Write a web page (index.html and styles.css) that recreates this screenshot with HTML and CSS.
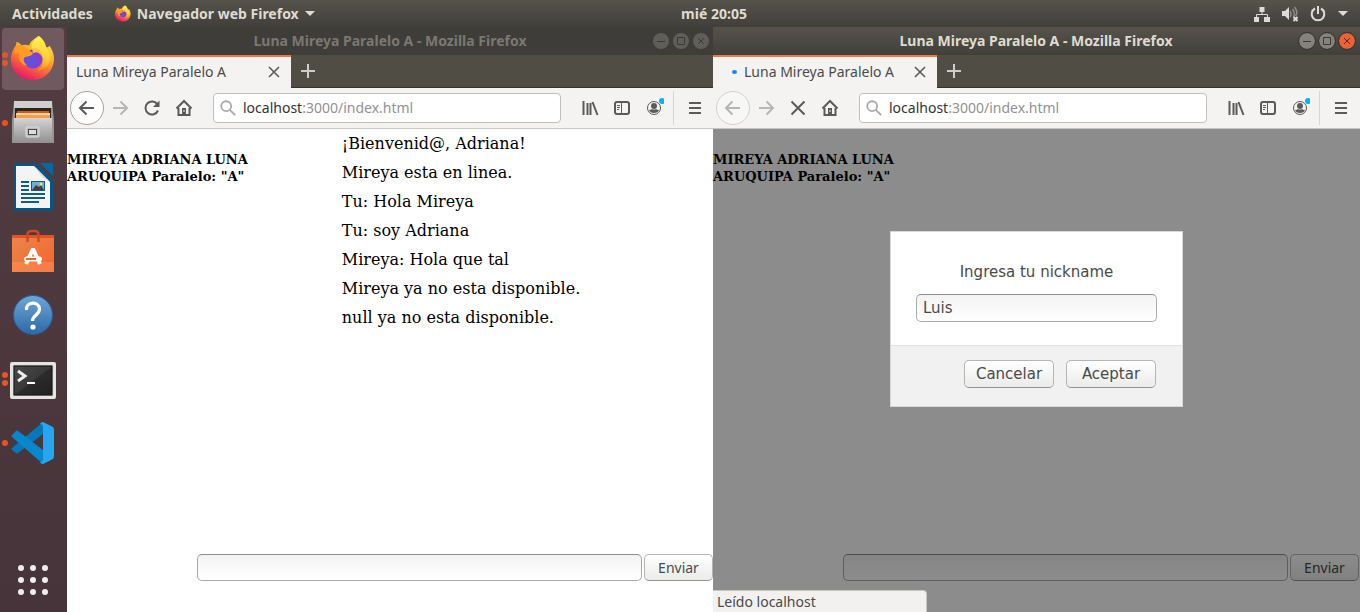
FILE: index.html
```html
<!DOCTYPE html>
<html lang="es">
<head>
<meta charset="utf-8">
<title>Luna Mireya Paralelo A</title>
<link rel="stylesheet" href="styles.css">
</head>
<body>
<svg class="defs" aria-hidden="true">
  <defs>
    <linearGradient id="flame" x1="0.8" y1="0" x2="0.3" y2="1"><stop offset="0" stop-color="#fff24a"/><stop offset=".38" stop-color="#ffb22e"/><stop offset=".65" stop-color="#ff6a34"/><stop offset="1" stop-color="#e5116f"/></linearGradient>
    <linearGradient id="flame-top" x1="0.6" y1="0" x2="0.5" y2="1"><stop offset="0" stop-color="#fff44f"/><stop offset=".6" stop-color="#ffd236"/><stop offset="1" stop-color="#ff9128"/></linearGradient>
    <radialGradient id="globe" cx=".4" cy=".7" r=".7"><stop offset="0" stop-color="#5a57e0"/><stop offset="1" stop-color="#9234cf"/></radialGradient>
    <linearGradient id="steel" x1="0" y1="0" x2="0" y2="1"><stop offset="0" stop-color="#d4d4d4"/><stop offset="1" stop-color="#8f8f8f"/></linearGradient>
    <linearGradient id="bag" x1="0" y1="0" x2="1" y2="1"><stop offset="0" stop-color="#e9874d"/><stop offset="1" stop-color="#f4642a"/></linearGradient>
    <linearGradient id="help" x1="0" y1="0" x2="0" y2="1"><stop offset="0" stop-color="#6ea6d8"/><stop offset="1" stop-color="#2b69a5"/></linearGradient>
    <linearGradient id="screen" x1="0" y1="0" x2="1" y2="1"><stop offset="0" stop-color="#4a4a4a"/><stop offset=".5" stop-color="#393939"/><stop offset=".52" stop-color="#2b2b2b"/><stop offset="1" stop-color="#202020"/></linearGradient>
  </defs>
  <symbol id="firefox" viewBox="0 0 46 48">
    <path d="M29 1c6 4 7 9 8 12 3 0 3-2 3-2 5 7 6 14 4 20-3 10-12 16-21 16C10 47 0 38 0 25c0-5 2-10 5-14l1-4c2 1 4 2 5 4 2-1 5-1 8 0 1-4 5-7 10-10z" fill="url(#flame)"/>
    <path d="M29 1c-5 4-8 8-7 13 5 0 9 3 11 8 2 7-1 12-5 15 9-1 14-8 13-16-1-5-3-6-5-9-1-4-3-8-7-11z" fill="url(#flame-top)"/>
    <circle cx="23" cy="25" r="10" fill="url(#globe)"/>
    <path d="M6 11c4-1 8 0 11 3l6 5c-1 3-5 3-8 4-4 2-1 6 2 9-8-1-10-8-8-14-2 0-4 1-5 3 0-4 0-7 2-10z" fill="#ff9d22"/>
    <path d="M22 14c8-1 12 5 12 11-2-4-4-6-7-7-2 0-4 1-4 1z" fill="#ffbf37"/>
  </symbol>
  <symbol id="back" viewBox="0 0 20 20"><path d="M17 10H3M9.500 3.500L3 10l6.500 6.500" class="line"/></symbol>
  <symbol id="forward" viewBox="0 0 20 20"><path d="M3 10h14M10.500 3.500L17 10l-6.500 6.500" class="line"/></symbol>
  <symbol id="reload" viewBox="0 0 20 20"><path d="M15.500 6.500a6.500 6.500 0 1 0 .5 6" class="line"/><path d="M17.500 2.500v6.500H11z" fill="currentColor"/></symbol>
  <symbol id="stop" viewBox="0 0 20 20"><path d="M3.500 3.500l13 13M16.500 3.500l-13 13" class="line"/></symbol>
  <symbol id="home" viewBox="0 0 20 20"><path d="M2.500 10.500L10 3l7.500 7.500M4.500 10v7h11v-7" class="line"/><path d="M8 10h4v6H8z" fill="currentColor"/><path d="M10 12v2" stroke="#f4f3f2"/></symbol>
  <symbol id="search" viewBox="0 0 20 20"><circle cx="8" cy="8" r="5.500" class="line"/><path d="M12 12l6 6" class="line"/></symbol>
  <symbol id="library" viewBox="0 0 20 20"><path d="M3.500 3v14M7.500 5v12M10.500 5v12M12.500 4l5 13" class="line"/></symbol>
  <symbol id="sidebar" viewBox="0 0 20 20"><rect x="3" y="4" width="14" height="12" rx="2" class="line"/><path d="M9.500 4v12M5 7.500h3M5 9.500h3M5 11.500h2" stroke="currentColor" fill="none"/></symbol>
  <symbol id="account" viewBox="0 0 20 20"><circle cx="10" cy="10" r="6.500" fill="none" stroke="currentColor"/><circle cx="10" cy="8" r="3" fill="currentColor"/><path d="M5 12q2 0 3-1 2 1 4 0 1 1 3 1-1 3-5 3t-5-3z" fill="currentColor"/><circle cx="18" cy="3" r="3" fill="#00b3f4"/></symbol>
  <symbol id="menu" viewBox="0 0 20 20"><path d="M4 5h12M4 10h12M4 15h12" class="line"/></symbol>
  <symbol id="close" viewBox="0 0 20 20"><path d="M5 5l10 10M15 5L5 15" class="line thin"/></symbol>
  <symbol id="plus" viewBox="0 0 20 20"><path d="M10 3v14M3 10h14" class="line"/></symbol>
</svg>

<header class="topbar">
  <div class="topbar-left">
    <button class="bar-button">Actividades</button>
    <button class="bar-button app-menu"><svg class="icon-16"><use href="#firefox"/></svg>Navegador web Firefox<span class="caret"></span></button>
  </div>
  <time class="clock">mié 20:05</time>
  <div class="tray">
    <svg class="tray-icon" viewBox="0 0 16 16"><path d="M5.500 1h5v5h-5zM0 11h5v5H0zM10 11h6v5h-6z" fill="#dcdbd8"/><path d="M8 6v2.500M2.500 11V8.500h11V11" fill="none" stroke="#dcdbd8"/></svg>
    <svg class="tray-icon" viewBox="0 0 16 16"><path d="M0 5h3l4-4v13l-4-4H0z" fill="#dcdbd8"/><path d="M8 5q2 3 0 6M10.500 3q3 4 1 8M12.500 1q4 5 1 9" fill="none" stroke="#8e8b84" stroke-width="1.500"/><path d="M11.500 11l4 4M15.500 11l-4 4" stroke="#dcdbd8" stroke-width="2"/></svg>
    <svg class="tray-icon" viewBox="0 0 16 16"><path d="M5 2.500a6.300 6.300 0 1 0 6 0M8 0v8" fill="none" stroke="#dcdbd8" stroke-width="2"/></svg>
    <span class="caret"></span>
  </div>
</header>

<div class="desktop">
  <nav class="dock" aria-label="Aplicaciones">
    <button class="app active" aria-label="Firefox"><span class="dots"><i></i><i></i></span><svg class="icon-48" viewBox="0 0 48 48"><use href="#firefox" x="1" y="0" width="46" height="46"/></svg></button>
    <button class="app" aria-label="Archivos"><span class="dots"><i></i></span><svg class="icon-48" viewBox="0 0 48 48"><path d="M5 2h38l2 20v22H3V22z" fill="#969696"/><path d="M5 2h38v7H5z" fill="#cfcfcf"/><path d="M6 9h36v12H6z" fill="#292522"/><path d="M8 12h32v8H8z" fill="#d45a20"/><path d="M7 14h34v2H7z" fill="#ffd39a"/><path d="M7 16h34v5H7z" fill="#f2a04c"/><path d="M5 19h38v25H5z" fill="url(#steel)"/><rect x="17" y="28" width="13" height="10" rx="1" fill="#b9b9b9" stroke="#e0e0e0"/><rect x="19.500" y="30.500" width="8" height="5" fill="#ddd" stroke="#484848"/></svg></button>
    <button class="app" aria-label="LibreOffice Writer"><span class="dots"></span><svg class="icon-48" viewBox="0 0 48 48"><path d="M7 0h20l17 17v28q0 3-3 3H7q-3 0-3-3V3q0-3 3-3z" fill="#0d5285"/><path d="M31 0h13v13z" fill="#0867a3"/><path d="M7 3h18l16 16v26H7z" fill="#f4f4f3"/><path d="M25 3l16 16-8-5z" fill="#d9dcdf"/><path d="M12 19h8M12 23h8M12 27h8M12 31h24M12 35h24M12 39h18" stroke="#125b8a" stroke-width="2"/><path d="M22 18h14v10H22z" fill="#145a8e"/><path d="M23 19h12v8H23z" fill="#6caed4"/><path d="M23 27l4-5 3 2 2-2 3 5z" fill="#3c4241"/><circle cx="32" cy="21" r="1.500" fill="#f8e05c"/></svg></button>
    <button class="app" aria-label="Software de Ubuntu"><span class="dots"></span><svg class="icon-48" viewBox="0 0 48 48"><path d="M3 8h42v37H3z" fill="url(#bag)"/><path d="M3 8h42v3H3z" fill="#e05325"/><path d="M3 35h42v10H3z" fill="#ff9c66" opacity=".4"/><path d="M18.500 15V8q0-4 4-4h3q4 0 4 4v7" fill="none" stroke="#cf4a20" stroke-width="2.500"/><path d="M17 37l6.500-14h1L31 37" fill="none" stroke="#fff" stroke-width="4"/><rect x="15" y="29.500" width="18" height="5" rx="2.500" fill="#fff"/><path d="M17 32h10" stroke="#e9692c" stroke-width="2"/></svg></button>
    <button class="app" aria-label="Ayuda"><span class="dots"></span><svg class="icon-48" viewBox="0 0 48 48"><circle cx="24" cy="24" r="19.500" fill="url(#help)" stroke="#285f96"/><path d="M17.500 19c-1-9 13-9 13-1 0 6-7 6-7 12" fill="none" stroke="#fff" stroke-width="3.200"/><circle cx="24" cy="36" r="2.600" fill="#fff"/></svg></button>
    <button class="app" aria-label="Terminal"><span class="dots"><i></i><i></i></span><svg class="icon-48" viewBox="0 0 48 48"><rect x="1" y="7" width="46" height="37" rx="2" fill="#e4e4e2"/><path d="M4 10h40v31H4z" fill="#aaa"/><path d="M5 11h38v29H5z" fill="url(#screen)" stroke="#171717"/><path d="M9 16l7 5-7 5" fill="none" stroke="#eee" stroke-width="3"/><path d="M18 28h8" stroke="#fff" stroke-width="2"/></svg></button>
    <button class="app" aria-label="Visual Studio Code"><span class="dots"><i></i></span><svg class="icon-48" viewBox="0 0 48 48"><path d="M34 3v12L9 34q-1 1-2 0l-4-3q-1-1 0-2z" fill="#0877b9"/><path d="M3 16l4-4q1-1 2 0l25 19v14L3 18q-1-1 0-2z" fill="#0788cc"/><path d="M34 3l10 5 1 2v28l-1 2-10 5q-2 0-3-2 3 0 3-3V8q0-3-3-3 1-2 3-2z" fill="#26a5f0"/></svg></button>
    <button class="app grid-button" aria-label="Mostrar aplicaciones"><span class="dots"></span><svg class="icon-48" viewBox="0 0 48 48"><g fill="#eee"><circle cx="12" cy="12" r="3"/><circle cx="24" cy="12" r="3"/><circle cx="36" cy="12" r="3"/><circle cx="12" cy="24" r="3"/><circle cx="24" cy="24" r="3"/><circle cx="36" cy="24" r="3"/><circle cx="12" cy="36" r="3"/><circle cx="24" cy="36" r="3"/><circle cx="36" cy="36" r="3"/></g></svg></button>
  </nav>

  <section class="window inactive">
    <div class="titlebar"><span class="title">Luna Mireya Paralelo A - Mozilla Firefox</span>
      <div class="controls">
        <button class="control" aria-label="Minimizar"><svg viewBox="0 0 16 16"><path d="M4 8.500h8"/></svg></button>
        <button class="control" aria-label="Maximizar"><svg viewBox="0 0 16 16"><path d="M4.500 4.500h7v7h-7z"/></svg></button>
        <button class="control quit" aria-label="Cerrar"><svg viewBox="0 0 16 16"><path d="M5 5l6 6M11 5l-6 6"/></svg></button>
      </div>
    </div>
    <div class="tabs"><div class="tab"><span class="tab-label">Luna Mireya Paralelo A</span><button class="tool small" aria-label="Cerrar pestaña"><svg><use href="#close"/></svg></button></div><button class="tool new-tab" aria-label="Nueva pestaña"><svg><use href="#plus"/></svg></button></div>
    <div class="toolbar">
      <button class="tool round" aria-label="Atrás"><svg><use href="#back"/></svg></button>
      <button class="tool faded" aria-label="Adelante"><svg><use href="#forward"/></svg></button>
      <button class="tool" aria-label="Recargar"><svg><use href="#reload"/></svg></button>
      <button class="tool" aria-label="Inicio"><svg><use href="#home"/></svg></button>
      <a class="address" href="#pagina-1"><svg><use href="#search"/></svg><span><b>localhost</b>:3000/index.html</span></a>
      <button class="tool" aria-label="Biblioteca"><svg><use href="#library"/></svg></button>
      <button class="tool" aria-label="Barra lateral"><svg><use href="#sidebar"/></svg></button>
      <button class="tool" aria-label="Cuenta"><svg><use href="#account"/></svg></button>
      <span class="divider"></span>
      <button class="tool" aria-label="Menú"><svg><use href="#menu"/></svg></button>
    </div>
    <main class="page" id="pagina-1">
      <div class="chat">
        <h5 class="owner">MIREYA ADRIANA LUNA ARUQUIPA Paralelo: "A"</h5>
        <ul class="messages">
          <li>¡Bienvenid@, Adriana!</li>
          <li>Mireya esta en linea.</li>
          <li>Tu: Hola Mireya</li>
          <li>Tu: soy Adriana</li>
          <li>Mireya: Hola que tal</li>
          <li>Mireya ya no esta disponible.</li>
          <li>null ya no esta disponible.</li>
        </ul>
      </div>
      <form class="composer"><input class="field" type="text" aria-label="Mensaje"><button class="push" type="button">Enviar</button></form>
    </main>
  </section>

  <section class="window focused">
    <div class="titlebar"><span class="title">Luna Mireya Paralelo A - Mozilla Firefox</span>
      <div class="controls">
        <button class="control" aria-label="Minimizar"><svg viewBox="0 0 16 16"><path d="M4 8.500h8"/></svg></button>
        <button class="control" aria-label="Maximizar"><svg viewBox="0 0 16 16"><path d="M4.500 4.500h7v7h-7z"/></svg></button>
        <button class="control quit" aria-label="Cerrar"><svg viewBox="0 0 16 16"><path d="M5 5l6 6M11 5l-6 6"/></svg></button>
      </div>
    </div>
    <div class="tabs"><div class="tab loading"><span class="spinner"></span><span class="tab-label">Luna Mireya Paralelo A</span><button class="tool small" aria-label="Cerrar pestaña"><svg><use href="#close"/></svg></button></div><button class="tool new-tab" aria-label="Nueva pestaña"><svg><use href="#plus"/></svg></button></div>
    <div class="toolbar">
      <button class="tool round faded" aria-label="Atrás"><svg><use href="#back"/></svg></button>
      <button class="tool faded" aria-label="Adelante"><svg><use href="#forward"/></svg></button>
      <button class="tool" aria-label="Detener"><svg><use href="#stop"/></svg></button>
      <button class="tool" aria-label="Inicio"><svg><use href="#home"/></svg></button>
      <a class="address" href="#pagina-2"><svg><use href="#search"/></svg><span><b>localhost</b>:3000/index.html</span></a>
      <button class="tool" aria-label="Biblioteca"><svg><use href="#library"/></svg></button>
      <button class="tool" aria-label="Barra lateral"><svg><use href="#sidebar"/></svg></button>
      <button class="tool" aria-label="Cuenta"><svg><use href="#account"/></svg></button>
      <span class="divider"></span>
      <button class="tool" aria-label="Menú"><svg><use href="#menu"/></svg></button>
    </div>
    <main class="page" id="pagina-2">
      <div class="chat"><h5 class="owner">MIREYA ADRIANA LUNA ARUQUIPA Paralelo: "A"</h5></div>
      <form class="composer"><input class="field" type="text" aria-label="Mensaje"><button class="push" type="button">Enviar</button></form>
      <div class="shade">
        <form class="prompt">
          <div class="prompt-body"><label for="nickname">Ingresa tu nickname</label><input class="field" id="nickname" type="text" value="Luis"></div>
          <div class="prompt-actions"><button class="push" type="button">Cancelar</button><button class="push" type="button">Aceptar</button></div>
        </form>
      </div>
      <div class="status">Leído localhost</div>
    </main>
  </section>
</div>
</body>
</html>
```
FILE: styles.css
```css
* { box-sizing: border-box; }
body {
  margin: 0;
  min-height: 100vh;
  display: flex;
  flex-direction: column;
  font: 14px/20px "Noto Sans", sans-serif;
  color: #4a4a4a;
}
button, input { font: inherit; color: inherit; }
button { border: 0; padding: 0; background: none; }
.defs { position: absolute; width: 0; height: 0; }
.line { fill: none; stroke: currentColor; stroke-width: 2; }
.thin { stroke-width: 1.6; }

/* Top bar */
.topbar {
  height: 27px;
  display: grid;
  grid-template-columns: 1fr auto 1fr;
  align-items: center;
  padding: 0 12px;
  background: linear-gradient(#56534b, #403f3a);
  color: #dfdbd2;
  font-weight: 700;
}
.topbar-left { display: flex; gap: 22px; }
.bar-button { display: flex; align-items: center; gap: 6px; }
.icon-16 { width: 16px; height: 17px; }
.caret { border: 5px solid transparent; border-top-color: #dfdbd2; border-bottom: 0; }
.clock { padding-left: 68px; }
.tray { display: flex; justify-content: flex-end; align-items: center; gap: 12px; }
.tray-icon { width: 16px; height: 16px; }

/* Desktop and dock */
.desktop { flex: 1; display: grid; grid-template-columns: 67px 646fr 647fr; }
.dock {
  display: flex;
  flex-direction: column;
  gap: 2px;
  padding: 1px 3px 1px 2px;
  background: linear-gradient(#523c41, #46343a);
}
.app { height: 62px; display: flex; align-items: center; border-radius: 4px; }
.app.active { background: #715a5f; }
.dots { width: 6px; display: flex; flex-direction: column; gap: 2px; }
.dots i { height: 6px; border-radius: 50%; background: #e95420; }
.icon-48 { width: 48px; height: 48px; margin-left: 1px; }
.grid-button { margin-top: auto; }

/* Windows */
.window { display: flex; flex-direction: column; min-width: 0; }
.titlebar {
  height: 28px;
  display: flex;
  align-items: center;
  padding-right: 4px;
  background: linear-gradient(#56534b, #403f3a);
  color: #dfdbd2;
  font-weight: 700;
}
.title { flex: 1; text-align: center; padding-left: 60px; }
.controls { display: flex; gap: 4px; }
.control { width: 16px; height: 16px; border-radius: 50%; background: #85827b; outline: 1px solid #35342f; }
.control svg { display: block; width: 16px; height: 16px; fill: none; stroke: #3a3934; }
.quit { background: #ee6134; }
.inactive .titlebar { background: #3e3d39; color: #7b7871; }
.inactive .control { background: #605e58; outline: 0; }
.tabs { height: 33px; display: flex; background: #504d45; border-bottom: 1px solid #33322e; }
.tab {
  flex: 0 1 224px;
  height: 33px;
  display: flex;
  align-items: center;
  padding: 0 7px 1px 9px;
  border-top: 2px solid #f07746;
  background: #f4f3f2;
}
.tab-label { flex: 1; white-space: nowrap; }
.tab.loading { padding-left: 19px; }
.spinner { width: 5px; height: 4px; margin-right: 7px; border-radius: 50%; background: #0a84ff; }
.tool { flex: none; width: 32px; height: 32px; display: grid; place-items: center; color: #5b5a59; }
.tool svg { width: 20px; height: 20px; overflow: visible; }
.tool.small { width: 20px; }
.tool.new-tab { width: 34px; color: #d0cdc7; }
.toolbar {
  height: 41px;
  display: flex;
  align-items: center;
  padding: 0 2px 0 3px;
  background: #f4f3f2;
  border-bottom: 1px solid #c9c5c1;
}
.focused .toolbar { padding-right: 3px; }
.focused .titlebar { padding-right: 5px; }
.tool.round { width: 34px; height: 34px; border: 1px solid #a5a3a1; border-radius: 50%; background: #fdfdfd; }
.tool.faded { color: #b7b6b5; }
.tool.round.faded { border-color: #d2d1d0; background: #f7f7f6; }
.address {
  flex: 1;
  height: 30px;
  display: flex;
  align-items: center;
  gap: 6px;
  margin: 0 13px;
  padding: 0 5px;
  border: 1px solid #c2bebb;
  border-radius: 4px;
  background: #fff;
  color: #929292;
  text-decoration: none;
}
.address svg { width: 18px; height: 18px; color: #a9a9a9; }
.address b { color: #333; font-weight: 400; }
.divider { width: 1px; height: 34px; margin: 0 5px 0 3px; background: #d8d6d4; }

/* Chat page */
.page {
  position: relative;
  flex: 1;
  display: flex;
  flex-direction: column;
  justify-content: space-between;
  padding-bottom: 31px;
  background: #fff;
}
.chat { display: grid; grid-template-columns: 30% 1fr; column-gap: 81px; color: #000; }
.owner { margin: 22px 0 0; font: 700 13px/17px "DejaVu Serif", serif; }
.messages { margin: 0; padding: 0; list-style: none; font: 16px/19px "DejaVu Serif", serif; }
.messages li { padding: 5px 0; }
.composer { display: flex; gap: 2px; padding-left: calc(20% + 1px); }
.focused .composer { padding-right: 1px; }
.field {
  flex: 1;
  min-width: 0;
  height: 27px;
  padding: 0 6px;
  border: 1px solid #aaa;
  border-top-color: #8e8e8e;
  border-radius: 5px;
  background: linear-gradient(#f3f3f3, #fff);
}
.push {
  width: 69px;
  height: 27px;
  border: 1px solid #b4b4b4;
  border-bottom-color: #929292;
  border-radius: 5px;
  background: linear-gradient(#fff, #ebebea);
}

/* Prompt over the page */
.shade {
  position: absolute;
  inset: 0;
  display: flex;
  align-items: flex-start;
  justify-content: center;
  padding-top: 102px;
  background: rgba(0, 0, 0, .45);
}
.prompt {
  width: 293px;
  border: 1px solid #d8d8d8;
  background: #fff;
  font: 15px/20px "DejaVu Sans", sans-serif;
}
.prompt-body { display: flex; flex-direction: column; gap: 12px; padding: 30px 25px 23px; text-align: center; }
.prompt-body .field { flex: none; height: 28px; }
.prompt-actions {
  display: flex;
  justify-content: flex-end;
  gap: 12px;
  padding: 14px 26px 18px;
  border-top: 1px solid #e0e0e0;
  background: #f1f1f1;
}
.prompt-actions .push { width: 90px; height: 28px; }
.status {
  position: absolute;
  left: 0;
  bottom: 0;
  width: 33%;
  height: 22px;
  padding-left: 4px;
  border: 1px solid #c9c5c1;
  border-width: 1px 1px 0 0;
  border-top-right-radius: 4px;
  background: #f2f1f0;
  line-height: 22px;
}
```
